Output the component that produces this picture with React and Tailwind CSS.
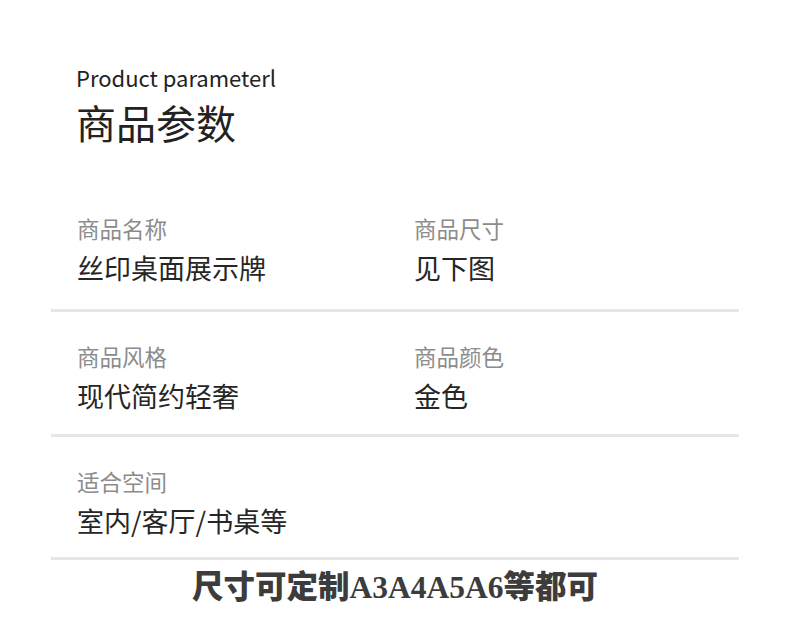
import React from "react";

const sans = { fontFamily: '"Noto Sans CJK SC", "Noto Sans", sans-serif' };

function Cell({ label, value }) {
  return (
    <div className="flex flex-col">
      <div className="text-[22.5px] leading-[30px] text-[#8c8c8c]">{label}</div>
      <div className="mt-[8px] text-[27px] leading-[34px] text-[#262626]">{value}</div>
    </div>
  );
}

function Row({ items, pb }) {
  return (
    <div className="flex flex-col">
      <div className={`grid grid-cols-[337px_1fr] pl-[26px] pt-[29px] ${pb}`}>
        {items.map((it) => (
          <Cell key={it.label} label={it.label} value={it.value} />
        ))}
      </div>
      <div className="h-[3px] bg-[#e6e6e6]" />
    </div>
  );
}

export default function App() {
  return (
    <div className="w-[790px] h-[626px] bg-white overflow-hidden" style={sans}>
      <div className="pl-[76px] pt-[63px]">
        <div className="text-[22px] leading-[28px] text-[#222]">Product parameterl</div>
        <div className="mt-[6px] text-[40px] leading-[50px] text-[#222]">商品参数</div>
      </div>
      <div className="mx-[51px] mt-[37px]">
        <Row
          pb="pb-[24px]"
          items={[
            { label: "商品名称", value: "丝印桌面展示牌" },
            { label: "商品尺寸", value: "见下图" },
          ]}
        />
        <Row
          pb="pb-[21px]"
          items={[
            { label: "商品风格", value: "现代简约轻奢" },
            { label: "商品颜色", value: "金色" },
          ]}
        />
        <Row pb="pb-[19px]" items={[{ label: "适合空间", value: "室内/客厅/书桌等" }]} />
      </div>
      <div
        className="mt-[10px] text-center text-[31.5px] leading-[36px] font-black text-[#3c3c3c]"
        style={{ fontFamily: '"Liberation Serif", "Noto Sans CJK SC", serif' }}
      >
        尺寸可定制A3A4A5A6等都可
      </div>
    </div>
  );
}
